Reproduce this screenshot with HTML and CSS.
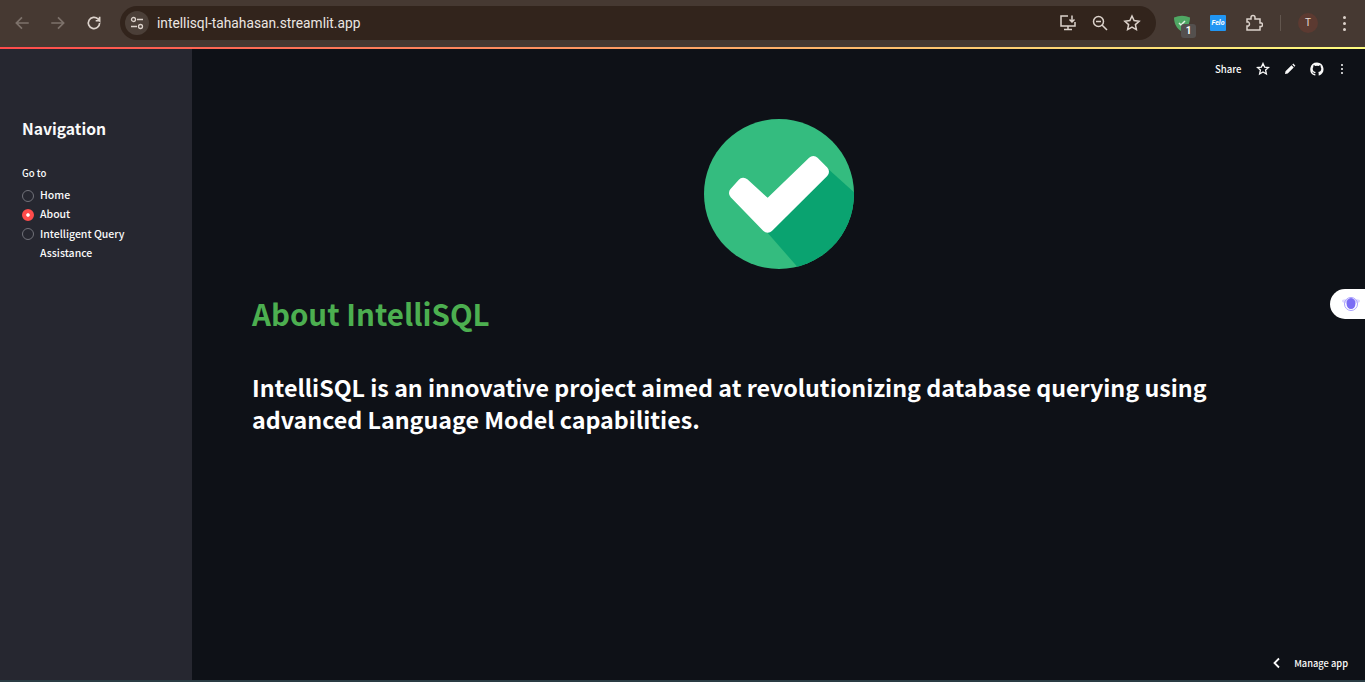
FILE: index.html
```html
<!DOCTYPE html>
<html lang="en">
	<head>
		<meta charset="utf-8"/>
		<meta name="viewport" content="width=device-width, initial-scale=1">
		<link rel="stylesheet" href="styles.css">
		<title>IntelliSQL</title>
	</head>
	<body>
		<header class="chrome">
			<div class="navBtns">
				<svg class="ico dim" viewBox="0 0 16 16"><path d="M14 8H3M8 3L3 8l5 5"/></svg>
				<svg class="ico dim" viewBox="0 0 16 16"><path d="M2 8h11M8 3l5 5-5 5"/></svg>
				<svg class="ico" viewBox="0 0 16 16"><path d="M13 8a5 5 0 1 1-1.5-3.6L13 6V2.500M13 6H9.500"/></svg>
			</div>
			<div class="omnibox">
				<div class="siteInfo">
					<svg class="ico small" viewBox="0 0 16 16"><circle cx="4.500" cy="4.500" r="2"/><path d="M8 4.500h6M2 11.500h6"/><circle cx="11.500" cy="11.500" r="2"/></svg>
				</div>
				<span class="url">intellisql-tahahasan.streamlit.app</span>
				<div class="omniIcons">
					<svg class="ico" viewBox="0 0 18 18"><path d="M9 2H2v10h14V8M5 15.500h8M9 12v3.500M13 1.500v6M10.500 5.500L13 8l2.500-2.500"/></svg>
					<svg class="ico" viewBox="0 0 18 18"><circle cx="7.500" cy="7.500" r="5"/><path d="M5 7.500h5M11 11l5 5"/></svg>
					<svg class="ico" viewBox="0 0 18 18"><path d="M9 2l2.100 4.600 5 .6-3.700 3.400 1 5L9 13.100l-4.400 2.500 1-5L1.900 7.200l5-.6z"/></svg>
				</div>
			</div>
			<div class="extensions">
				<div class="shieldExt">
					<svg viewBox="0 0 18 18" width="18" height="18"><path class="shieldFill" d="M1 3.500Q9 0 17 3.500C17 10 14 15 9 17.500 4 15 1 10 1 3.500z"/><path class="shieldTick" d="M6 9l2 2 4-4"/></svg>
					<span class="extBadge">1</span>
				</div>
				<div class="feloExt">Felo</div>
				<svg class="ico" viewBox="0 0 18 18"><path d="M2 5h4V3.500a2 2 0 0 1 4 0V5h5v4h1.500a2 2 0 0 1 0 3.500H15V16H2v-4h1.500a2.500 2.500 0 0 0 0-4H2z"/></svg>
				<div class="chromeSep"></div>
				<div class="avatar">T</div>
				<div class="chromeKebab"><i></i><i></i><i></i></div>
			</div>
		</header>
		<div class="gradientBar"></div>
		<div class="app">
			<aside class="sidebar">
				<h2>Navigation</h2>
				<p class="radioLabel">Go to</p>
				<div class="radioRow"><span class="radio"></span><span>Home</span></div>
				<div class="radioRow"><span class="radio on"></span><span>About</span></div>
				<div class="radioRow"><span class="radio"></span><span>Intelligent Query<br>Assistance</span></div>
			</aside>
			<main class="main">
				<div class="toolbar">
					<span class="shareLink">Share</span>
					<svg class="tool" viewBox="0 0 14 14"><path class="toolLine" d="M7 1.500l1.600 3.600 3.900.4-2.900 2.600.8 3.900L7 10l-3.400 2 .8-3.900-2.900-2.600 3.900-.4z"/></svg>
					<svg class="tool" viewBox="0 0 14 14"><path class="toolFill" d="M2 12l.5-2.700 6-6 2.200 2.200-6 6zM9.300 2.600l1-1 2.100 2.100-1 1z"/></svg>
					<svg class="tool" viewBox="0 0 16 16"><path class="toolFill" d="M8 .5a7.700 7.700 0 0 0-2.400 15c.4.100.5-.2.500-.4v-1.400c-2.100.5-2.600-1-2.600-1-.3-.9-.8-1.100-.8-1.100-.7-.5 0-.5 0-.5.800.1 1.200.8 1.200.8.700 1.200 1.800.8 2.200.6.100-.5.300-.8.500-1-1.700-.2-3.500-.9-3.500-3.800 0-.8.300-1.500.8-2-.1-.2-.3-1 .1-2 0 0 .6-.2 2.100.8a7.300 7.300 0 0 1 3.800 0c1.500-1 2.100-.8 2.100-.8.400 1 .2 1.800.1 2 .5.500.8 1.200.8 2 0 2.900-1.800 3.600-3.500 3.800.3.200.5.700.5 1.400v2.100c0 .2.100.5.500.4A7.700 7.700 0 0 0 8 .5z"/></svg>
					<div class="toolKebab"><i></i><i></i><i></i></div>
				</div>
				<div class="logoWrap">
					<svg class="logo" viewBox="0 0 150 150">
						<defs><clipPath id="disc"><circle cx="75" cy="75" r="75"/></clipPath></defs>
						<circle cx="75" cy="75" r="75" fill="#34bc7f"/>
						<path d="M122 48L152 75V152H97L62 112z" fill="#0aa370" clip-path="url(#disc)"/>
						<path d="M31 74L39.300 64.700 63.700 87 109.300 43 119 52.700 63.700 107.700z" fill="#fff" stroke="#fff" stroke-width="12" stroke-linejoin="round"/>
					</svg>
				</div>
				<h1 class="title">About IntelliSQL</h1>
				<h2 class="lead">IntelliSQL is an innovative project aimed at revolutionizing database querying using advanced Language Model capabilities.</h2>
				<div class="floatTab">
					<svg viewBox="0 0 20 20" width="20" height="20"><ellipse cx="4" cy="7" rx="3" ry="1.800" fill="#dcd6ff"/><ellipse cx="16" cy="7" rx="3" ry="1.800" fill="#dcd6ff"/><circle cx="10" cy="10" r="6.500" fill="none" stroke="#a9a0ff" stroke-width="1"/><ellipse cx="10" cy="9.500" rx="4.500" ry="5.500" fill="#7a6cf5"/></svg>
				</div>
				<div class="manageApp">
					<svg class="chev" viewBox="0 0 10 12"><path d="M7 1.500L2.500 6 7 10.500"/></svg>
					<span>Manage app</span>
				</div>
			</main>
		</div>
		<div class="bottomEdge"></div>
	</body>
</html>
```

FILE: styles.css
```css
* {
	margin: 0;
	padding: 0;
	box-sizing: border-box;
}
html, body {
	height: 100%;
	overflow: hidden;
}
body {
	display: flex;
	flex-direction: column;
	background-color: #0e1117;
	font-family: "Noto Sans CJK SC", "Noto Sans", sans-serif;
	color: #fafafa;
}
.chrome {
	display: flex;
	align-items: center;
	height: 47px;
	flex-shrink: 0;
	background-color: #463932;
	padding-bottom: 1px;
}
.navBtns {
	display: flex;
	gap: 18px;
	padding-left: 13px;
	width: 120px;
}
.ico {
	width: 18px;
	height: 18px;
	fill: none;
	stroke: #dcd2cb;
	stroke-width: 1.500;
	flex-shrink: 0;
}
.ico.dim {
	stroke: #7d726b;
}
.ico.small {
	width: 16px;
	height: 16px;
	stroke-width: 1.300;
}
.omnibox {
	display: flex;
	align-items: center;
	width: 1036px;
	height: 34px;
	border-radius: 17px;
	background-color: #32241c;
	padding: 0 15px 0 5px;
}
.siteInfo {
	display: flex;
	align-items: center;
	justify-content: center;
	width: 24px;
	height: 24px;
	border-radius: 50%;
	background-color: #4b3f38;
}
.url {
	margin-left: 8px;
	font-family: "Roboto", sans-serif;
	font-size: 13.750px;
	color: #ece6e2;
}
.omniIcons {
	display: flex;
	gap: 14px;
	margin-left: auto;
}
.extensions {
	display: flex;
	align-items: center;
	margin-left: 17px;
}
.shieldExt {
	position: relative;
	width: 18px;
	height: 18px;
}
.shieldExt svg {
	display: block;
}
.shieldFill {
	fill: #4fa763;
}
.shieldTick {
	fill: none;
	stroke: #dff2e2;
	stroke-width: 1.500;
}
.extBadge {
	position: absolute;
	left: 8px;
	top: 10px;
	width: 15px;
	height: 14px;
	border-radius: 3px;
	background-color: #54504e;
	color: #fff;
	font-family: "Roboto", sans-serif;
	font-size: 10px;
	font-weight: 700;
	line-height: 14px;
	text-align: center;
}
.feloExt {
	width: 16px;
	height: 16px;
	margin-left: 19px;
	margin-right: 19px;
	background-color: #2196f3;
	color: #fff;
	font-family: "Roboto", sans-serif;
	font-size: 7px;
	font-weight: 700;
	font-style: italic;
	line-height: 16px;
	text-align: center;
	border-radius: 1px;
}
.chromeSep {
	width: 1px;
	height: 16px;
	margin: 0 17px 0 17px;
	background-color: #62564e;
}
.avatar {
	width: 20px;
	height: 20px;
	border-radius: 50%;
	background-color: #5c3a31;
	color: #e8dcd6;
	font-family: "Roboto", sans-serif;
	font-size: 10px;
	line-height: 20px;
	text-align: center;
}
.chromeKebab, .toolKebab {
	display: flex;
	flex-direction: column;
	align-items: center;
}
.chromeKebab {
	gap: 3px;
	margin-left: 25px;
}
.chromeKebab i {
	width: 3px;
	height: 3px;
	border-radius: 50%;
	background-color: #dcd2cb;
}
.toolKebab {
	gap: 1.500px;
	margin-left: 4px;
}
.toolKebab i {
	width: 2.500px;
	height: 2.500px;
	border-radius: 50%;
	background-color: #fafafa;
}
.gradientBar {
	height: 2px;
	flex-shrink: 0;
	background-image: linear-gradient(90deg, #ff4b4b, #fffd80);
}
.app {
	display: flex;
	flex: 1;
	min-height: 0;
}
.sidebar {
	width: 192px;
	flex-shrink: 0;
	background-color: #262730;
	padding: 68px 22px 0;
}
.sidebar h2 {
	font-size: 15.700px;
	font-weight: 700;
	line-height: 23px;
	margin-bottom: 26px;
}
.radioLabel {
	font-size: 9.600px;
	font-weight: 500;
	line-height: 14px;
	margin-bottom: 5px;
}
.radioRow {
	display: flex;
	align-items: flex-start;
	gap: 6px;
	font-size: 10.500px;
	font-weight: 500;
	line-height: 19.300px;
}
.radio {
	flex-shrink: 0;
	width: 12px;
	height: 12px;
	margin-top: 4.500px;
	border-radius: 50%;
	background-color: #262730;
	border: 1px solid #71727a;
}
.radio.on {
	background-color: #ff4b4b;
	border: 4px solid #ff4b4b;
	box-shadow: inset 0 0 0 2px #fff;
}
.main {
	position: relative;
	flex: 1;
	min-width: 0;
	padding: 0 60px;
}
.toolbar {
	position: absolute;
	top: 13px;
	right: 22px;
	display: flex;
	align-items: center;
	height: 14px;
}
.shareLink {
	font-size: 9.600px;
	font-weight: 500;
	margin-right: 14px;
}
.tool {
	width: 14px;
	height: 14px;
	margin-right: 13px;
}
.toolLine {
	fill: none;
	stroke: #fafafa;
	stroke-width: 1.300;
}
.toolFill {
	fill: #fafafa;
}
.logoWrap {
	display: flex;
	justify-content: center;
	padding-top: 70px;
}
.logo {
	display: block;
	width: 150px;
	height: 150px;
}
.title {
	margin-top: 24px;
	font-size: 29.500px;
	font-weight: 700;
	line-height: 40px;
	color: #4caf50;
}
.lead {
	margin-top: 38px;
	font-size: 23.250px;
	font-weight: 700;
	line-height: 32px;
	color: #fff;
}
.floatTab {
	position: absolute;
	top: 240px;
	right: 0;
	display: flex;
	align-items: center;
	padding-left: 11px;
	width: 35px;
	height: 30px;
	border-radius: 15px 0 0 15px;
	background-color: #fff;
}
.manageApp {
	position: absolute;
	right: 17px;
	bottom: 10px;
	display: flex;
	align-items: center;
	gap: 12px;
	font-size: 9.300px;
	font-weight: 500;
}
.chev {
	width: 10px;
	height: 12px;
	fill: none;
	stroke: #fafafa;
	stroke-width: 1.800;
}
.bottomEdge {
	height: 2px;
	flex-shrink: 0;
	background-color: #2a3c44;
}
```
